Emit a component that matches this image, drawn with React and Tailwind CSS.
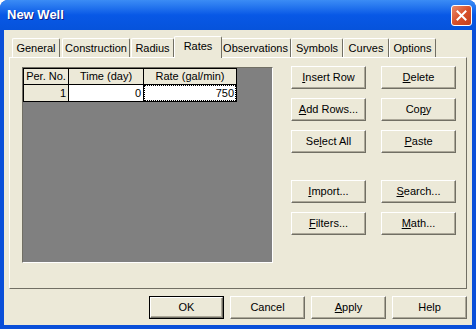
import React from "react";

const face = "bg-[#ECE9D8]";

// classic 3D button on the XP beige face
const Btn = ({ children, def = false, w = "w-[75px]" }) => (
  <div className={`${w} h-[23px] ${def ? "border border-black" : ""}`}>
    <div
      className={`w-full h-full ${face} border-t border-l border-t-white border-l-white border-r border-b border-r-[#716F64] border-b-[#716F64] shadow-[inset_-1px_-1px_0_#ACA899] flex items-center justify-center text-[11px] text-black`}
    >
      {children}
    </div>
  </div>
);

const U = ({ children }) => <span className="underline underline-offset-1">{children}</span>;

const tabs = [
  { label: "General", w: "w-[48px]", ml: "ml-0" },
  { label: "Construction", w: "w-[68px]", ml: "ml-[2px]" },
  { label: "Radius", w: "w-[43px]", ml: "ml-[1px]" },
  { label: "Rates", w: "w-[48px]", ml: "ml-0", active: true },
  { label: "Observations", w: "w-[71px]", ml: "ml-[-2px]" },
  { label: "Symbols", w: "w-[52px]", ml: "ml-0" },
  { label: "Curves", w: "w-[46px]", ml: "ml-0" },
  { label: "Options", w: "w-[47px]", ml: "ml-0" },
];

export default function App() {
  return (
    <div
      className="w-[476px] h-[329px] flex flex-col bg-[#0A4FD9] rounded-t-[8px] overflow-hidden"
      style={{ fontFamily: '"Liberation Sans", Arial, sans-serif' }}
    >
      {/* Title bar */}
      <div className="h-[30px] flex items-center justify-between pl-[7px] pr-[4px] bg-gradient-to-b from-[#3B8CF5] via-[#0858E6] to-[#0653DB]">
        <span className="text-white font-bold text-[13px] [text-shadow:1px_1px_0_#0A1E8C]">New Well</span>
        <div className="w-[21px] h-[21px] rounded-[3px] border border-white bg-gradient-to-br from-[#E98A6A] via-[#D9502A] to-[#C2401C] flex items-center justify-center">
          <svg width="11" height="11" viewBox="0 0 11 11">
            <path d="M1.5 1.5 L9.5 9.5 M9.5 1.5 L1.5 9.5" stroke="white" strokeWidth="2" strokeLinecap="square" />
          </svg>
        </div>
      </div>

      {/* Client area */}
      <div className={`flex-1 mx-[4px] mb-[4px] ${face} flex flex-col pt-[6px]`}>
        {/* Tab strip */}
        <div className="flex items-end pl-[8px] h-[21px] relative z-10">
          {tabs.map((t) => (
            <div
              key={t.label}
              className={`${t.w} ${t.ml} ${face} border-t border-l border-r border-t-white border-l-white border-r-[#716F64] rounded-t-[2px] flex items-center justify-center text-[11px] text-black ${
                t.active ? "h-[22px] mb-[-1px] pb-[3px] relative z-10" : "h-[19px]"
              }`}
            >
              {t.label}
            </div>
          ))}
        </div>

        {/* Tab panel */}
        <div className="ml-[5px] w-[458px] h-[232px] border border-t-white border-l-white border-r-[#716F64] border-b-[#716F64] flex items-start">
          {/* Grid */}
          <div className="ml-[12px] mt-[9px] w-[251px] h-[196px] bg-[#808080] border border-t-[#716F64] border-l-[#716F64] border-r-white border-b-white">
            <div className="border-t border-l border-black w-[214px] text-[11px] text-black">
              <div className="flex h-[16px]">
                <div className={`w-[45px] ${face} border-r border-b border-black flex items-center justify-center`}>Per. No.</div>
                <div className={`w-[75px] ${face} border-r border-b border-black flex items-center justify-center`}>Time (day)</div>
                <div className={`w-[93px] ${face} border-r border-b border-black flex items-center justify-center`}>Rate (gal/min)</div>
              </div>
              <div className="flex h-[17px]">
                <div className={`w-[45px] ${face} border-r border-b border-black flex items-center justify-end pr-[2px]`}>1</div>
                <div className="w-[75px] bg-white border-r border-b border-black flex items-center justify-end pr-[2px]">0</div>
                <div className="w-[93px] bg-white border-r border-b border-black flex">
                  <div className="flex-1 border border-dotted border-black flex items-center justify-end pr-[1px]">750</div>
                </div>
              </div>
            </div>
          </div>

          {/* Action buttons */}
          <div className="ml-[18px] mt-[8px] flex flex-col">
            <div className="flex gap-[15px]">
              <Btn>
                <U>I</U>nsert Row
              </Btn>
              <Btn>
                <U>D</U>elete
              </Btn>
            </div>
            <div className="flex gap-[15px] mt-[9px]">
              <Btn>
                <U>A</U>dd Rows...
              </Btn>
              <Btn>
                Co<U>p</U>y
              </Btn>
            </div>
            <div className="flex gap-[15px] mt-[9px]">
              <Btn>
                Se<U>l</U>ect All
              </Btn>
              <Btn>
                <U>P</U>aste
              </Btn>
            </div>
            <div className="flex gap-[15px] mt-[27px]">
              <Btn>
                <U>I</U>mport...
              </Btn>
              <Btn>
                <U>S</U>earch...
              </Btn>
            </div>
            <div className="flex gap-[15px] mt-[9px]">
              <Btn>
                <U>F</U>ilters...
              </Btn>
              <Btn>
                <U>M</U>ath...
              </Btn>
            </div>
          </div>
        </div>

        {/* Dialog buttons */}
        <div className="flex justify-end gap-[6px] pr-[5px] mt-[7px]">
          <Btn def>OK</Btn>
          <Btn>Cancel</Btn>
          <Btn>
            <U>A</U>pply
          </Btn>
          <Btn>Help</Btn>
        </div>
      </div>
    </div>
  );
}
